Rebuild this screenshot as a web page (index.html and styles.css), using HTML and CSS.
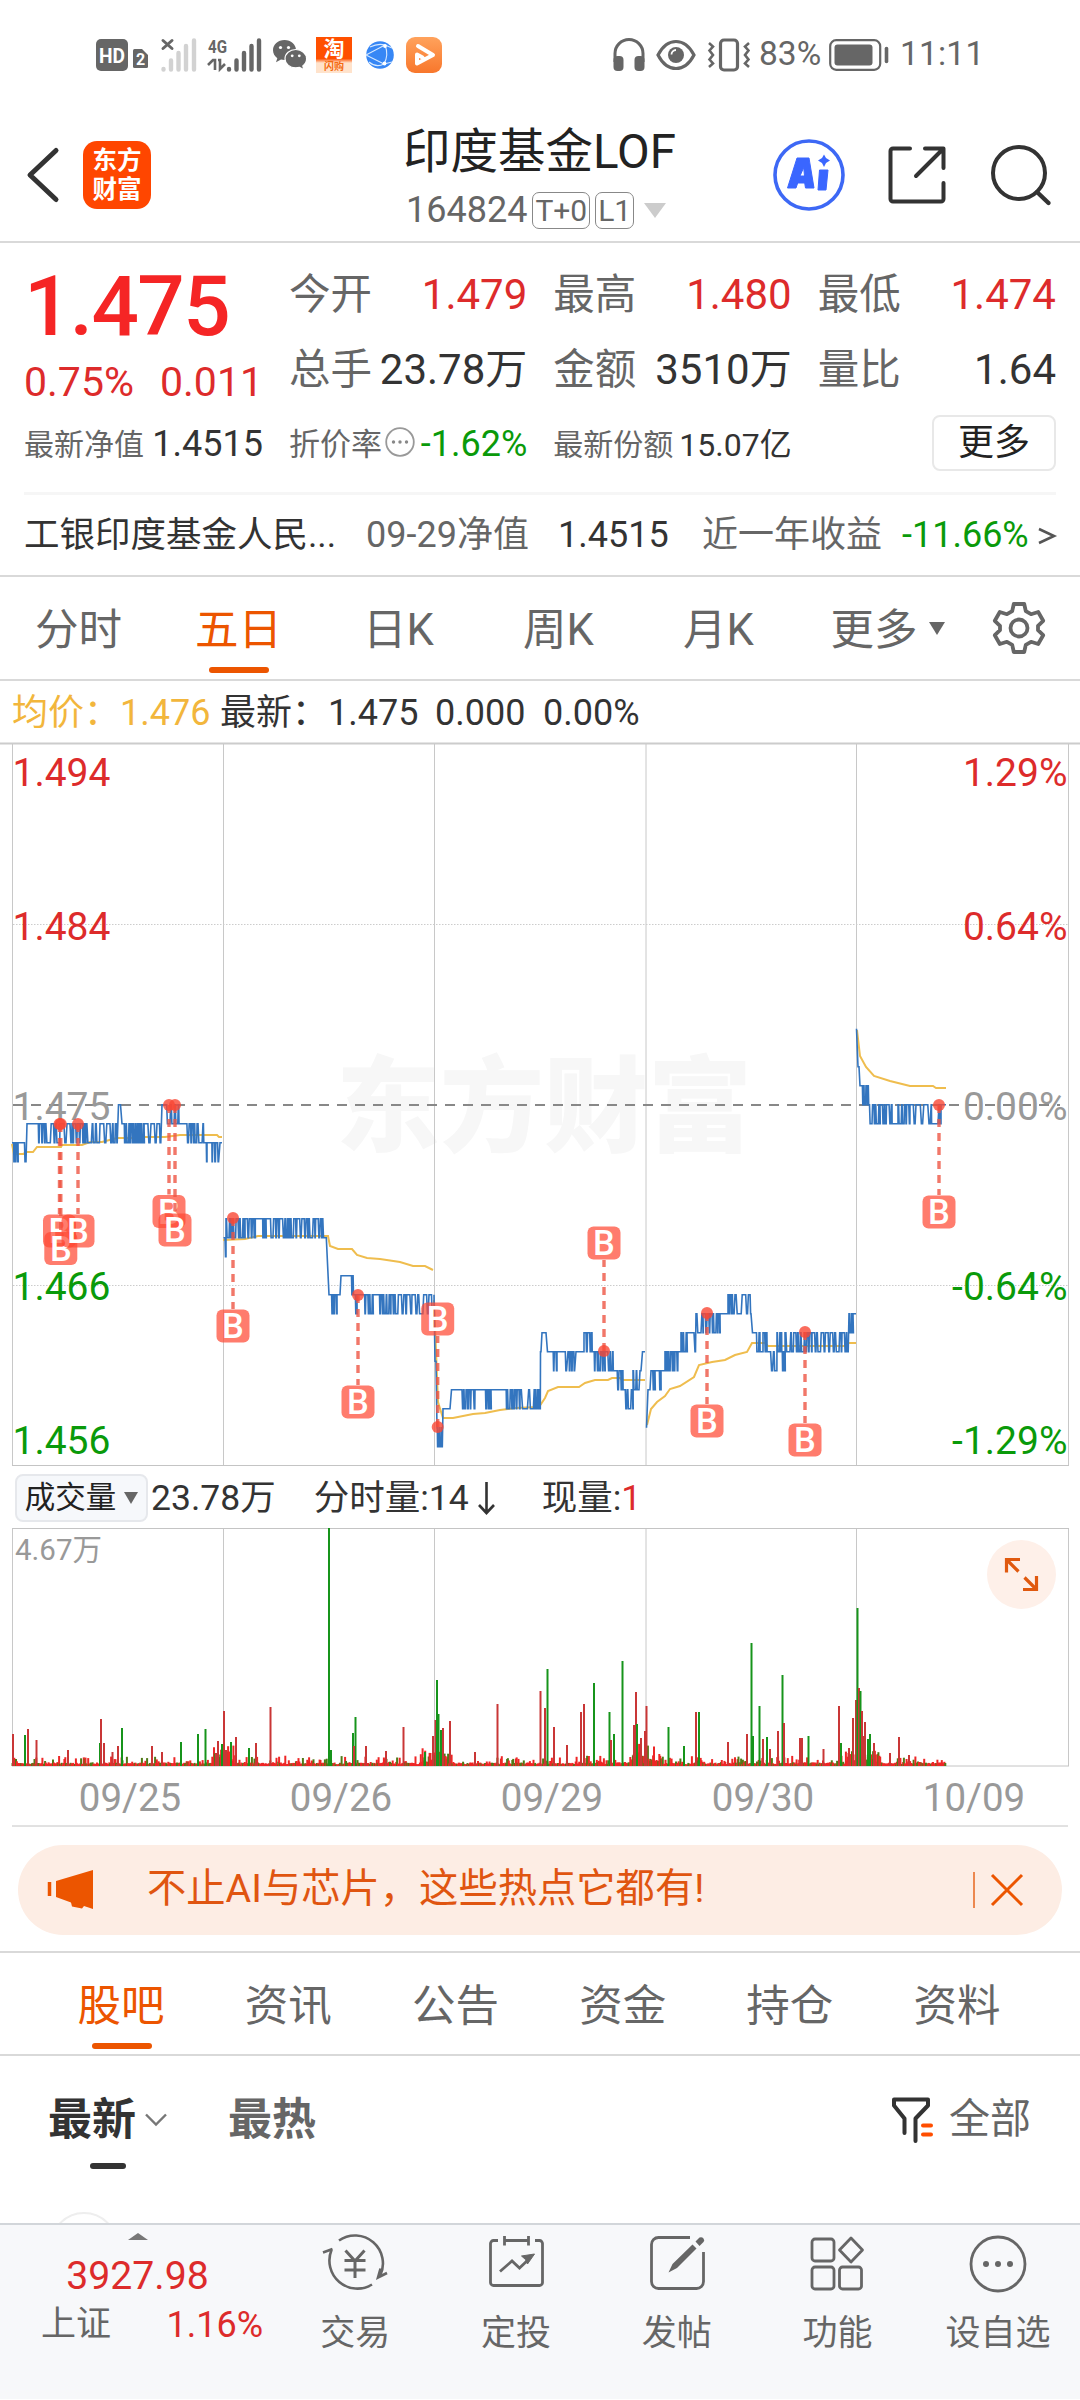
FILE: index.html
```html
<!DOCTYPE html>
<html lang="zh-CN">

<head>
    <meta charset="utf-8">
    <title>印度基金LOF</title>
    <meta name="viewport" content="width=device-width, initial-scale=1" />
    <link rel="stylesheet" href="styles.css">
</head>

<body>
    <div class="status">
        <svg class="hd" width="52" height="32" viewBox="0 0 52 32">
            <rect x="0" y="0" width="32" height="32" rx="5" fill="#666" />
            <text x="16" y="23.5" font-size="20" font-weight="700" fill="#fff" text-anchor="middle" textLength="26" lengthAdjust="spacingAndGlyphs">HD</text>
            <path d="M37 11.500a1.500 1.500 0 0 1 1.500-1.500H46l6 6v11.500a1.500 1.500 0 0 1-1.500 1.500h-12a1.500 1.500 0 0 1-1.500-1.500z" fill="#666" />
            <text x="44.500" y="26" font-size="16" font-weight="700" fill="#fff" text-anchor="middle">2</text>
        </svg>
        <svg class="sim1" width="36" height="34" viewBox="0 0 36 34">
            <path d="M2 2.500l9 8M11 2.500l-9 8" stroke="#666" stroke-width="3" stroke-linecap="round" />
            <path d="M2.500 31v.5M10 22.500v9M17.500 15v16.500M25 8v23.500M33 2.500v29" stroke="#d2d2d2" stroke-width="4.400" stroke-linecap="round" />
        </svg>
        <svg class="sim2" width="54" height="34" viewBox="0 0 54 34">
            <text x="0" y="14.500" font-size="19" font-weight="700" fill="#666" textLength="19" lengthAdjust="spacingAndGlyphs">4G</text>
            <path d="M0 27l5-5h2v10M10 22h2v9l5-5" fill="none" stroke="#666" stroke-width="2.600" />
            <path d="M21 31v.5M28.500 22.500v9M36 15v16.500M43.500 8v23.500M51 2.500v29" stroke="#666" stroke-width="4.400" stroke-linecap="round" />
        </svg>
        <svg class="wechat" width="34" height="30" viewBox="0 0 34 30">
            <path d="M11.500 0C5 0 0 4.500 0 10.200c0 3.200 1.700 6 4.300 8L3 22.300l5-2.700c1 .3 2.200.5 3.500.5 6.300 0 11.500-4.400 11.500-10S18 0 11.500 0z" fill="#666" />
            <path d="M22.800 9.500c-6.200 0-10.800 4.200-10.800 9.200s4.600 9.100 10.800 9.100c1.300 0 2.600-.2 3.700-.5l4.500 2.500-1.200-3.900c2.300-1.700 3.800-4.300 3.800-7.200 0-5-4.800-9.200-10.800-9.200z" fill="#666" stroke="#fff" stroke-width="1.200" />
            <g fill="#fff">
                <circle cx="7.500" cy="7.500" r="1.600" /><circle cx="15.500" cy="7.500" r="1.600" />
                <circle cx="19.200" cy="15.800" r="1.400" /><circle cx="26.300" cy="15.800" r="1.400" />
            </g>
        </svg>
        <div class="taobao"><b>淘</b><i>闪购</i></div>
        <svg class="globe" width="28" height="28" viewBox="0 0 28 28">
            <circle cx="14" cy="14" r="13.800" fill="#3787f5" />
            <path d="M0 14L19 4M0 14l18 9M19 4q4 10-1 19M4 6q8-4 15-2l7 3M18 23l8-2M3 21q7 6 15 2" fill="none" stroke="#d7e9ff" stroke-width="1.100" />
            <circle cx="19" cy="5" r="1.900" fill="#fff" /><circle cx="18.500" cy="22.500" r="1.900" fill="#fff" />
        </svg>
        <svg class="player" width="36" height="36" viewBox="0 0 36 36">
            <defs>
                <linearGradient id="og" x2="0" y2="1"><stop offset="0" stop-color="#ffa25c" /><stop offset="1" stop-color="#f8772c" /></linearGradient>
            </defs>
            <rect width="36" height="36" rx="9" fill="url(#og)" />
            <path d="M12 9l15 9-16 8.500v-9l5.500 3" fill="none" stroke="#fff" stroke-width="4" stroke-linejoin="round" stroke-linecap="round" />
        </svg>
        <div class="status-right">
            <svg width="32" height="34" viewBox="0 0 32 34">
                <path d="M2 24V15.500a14 14 0 0 1 28 0V24" fill="none" stroke="#666" stroke-width="3" />
                <rect x="0.500" y="18" width="10" height="15" rx="4" fill="#666" /><rect x="21.500" y="18" width="10" height="15" rx="4" fill="#666" />
            </svg>
            <svg class="eye" width="40" height="32" viewBox="0 0 40 32">
                <path d="M2 16Q9 2.500 20 2.500T38 16Q31 29.500 20 29.500T2 16z" fill="none" stroke="#666" stroke-width="3.200" />
                <circle cx="20" cy="16" r="8" fill="#666" />
                <path d="M15.500 15.500a4.500 4.500 0 0 1 4.500-4.500" fill="none" stroke="#fff" stroke-width="1.800" />
            </svg>
            <svg class="vibrate" width="42" height="34" viewBox="0 0 42 34">
                <rect x="12.500" y="2" width="17" height="30" rx="3.500" fill="none" stroke="#666" stroke-width="3.200" />
                <path d="M1 5l4 3.500-3.500 4L5 17l-3.500 4.500L5 25.500 1 29M41 5l-4 3.500 3.500 4L37 17l3.500 4.500-3.500 4 4 3.500" fill="none" stroke="#666" stroke-width="2.600" />
            </svg>
            <span class="battery-text">83%</span>
            <svg class="battery" width="60" height="32" viewBox="0 0 60 32">
                <rect x="1.200" y="1.200" width="50" height="29.600" rx="6" fill="none" stroke="#666" stroke-width="2.200" />
                <rect x="5.500" y="5.500" width="38" height="21" rx="3" fill="#666" />
                <path d="M57.500 9.500v13" stroke="#666" stroke-width="3.600" stroke-linecap="round" />
            </svg>
            <span class="clock">11:11</span>
        </div>
    </div>

    <header class="header">
        <svg class="back" width="32" height="54" viewBox="0 0 32 54">
            <path d="M29 2.500L3 27l26 24.500" fill="none" stroke="#333" stroke-width="5" stroke-linecap="round" stroke-linejoin="round" />
        </svg>
        <div class="app-logo">东方<br>财富</div>
        <div class="title">
            <h1>印度基金LOF</h1>
            <div class="code">164824<span class="tag">T+0</span><span class="tag">L1</span><i class="down"></i></div>
        </div>
        <svg class="ai" width="72" height="72" viewBox="0 0 72 72">
            <circle cx="36" cy="36" r="34" fill="none" stroke="#3d68f5" stroke-width="3.600" />
            <path d="M14.500 49L24 19h12l5 30h-8.500l-.8-5h-7l-1.700 5zM27 37h4.500l-.8-8.500zM46.500 31h8.500l-2 20h-8z" fill="#3a66ff" stroke="#3a66ff" stroke-linejoin="round" />
            <path d="M51 15.500l2 3.500 4 2.500-4 2.500-2 4-2-4-4-2.500 4-2.500z" fill="#3a66ff" />
        </svg>
        <svg class="share" width="58" height="58" viewBox="0 0 58 58">
            <path d="M22 2.500H5A2.500 2.500 0 0 0 2.500 5v48A2.500 2.500 0 0 0 5 55.500h48a2.500 2.500 0 0 0 2.500-2.500V37M37 2.500h18.500V22M54.500 3.500L28 30" fill="none" stroke="#333" stroke-width="4" stroke-linecap="round" stroke-linejoin="round" />
        </svg>
        <svg class="search" width="60" height="60" viewBox="0 0 60 60">
            <circle cx="28" cy="28" r="26" fill="none" stroke="#333" stroke-width="4" />
            <path d="M46 47l11.500 11" stroke="#333" stroke-width="4.400" stroke-linecap="round" />
        </svg>
    </header>

    <section class="quote">
        <div class="last">
            <strong>1.475</strong>
            <p><span>0.75%</span><span>0.011</span></p>
        </div>
        <div class="cell"><label>今开</label><span class="up">1.479</span></div>
        <div class="cell"><label>最高</label><span class="up">1.480</span></div>
        <div class="cell"><label>最低</label><span class="up">1.474</span></div>
        <div class="cell"><label>总手</label><span>23.78万</span></div>
        <div class="cell"><label>金额</label><span>3510万</span></div>
        <div class="cell"><label>量比</label><span>1.64</span></div>
        <div class="cell small"><label>最新净值</label><span>1.4515</span></div>
        <div class="cell small rate"><label>折价率</label>
            <svg width="30" height="30" viewBox="0 0 30 30"><circle cx="15" cy="15" r="13.800" fill="none" stroke="#999" stroke-width="1.800" /><g fill="#888"><circle cx="8.500" cy="15" r="1.700" /><circle cx="15" cy="15" r="1.700" /><circle cx="21.500" cy="15" r="1.700" /></g></svg>
            <span class="fall">-1.62%</span></div>
        <div class="cell small shares"><label>最新份额</label><span>15.07亿</span></div>
        <div class="cell small"><button class="more">更多</button></div>
    </section>

    <section class="fund">
        <span class="fund-name">工银印度基金人民...</span>
        <label class="nav-date">09-29净值</label>
        <span class="nav-value">1.4515</span>
        <label class="year">近一年收益</label>
        <span class="fall">-11.66%</span>
        <svg width="18" height="24" viewBox="0 0 18 24"><path d="M1 5l15 7-15 7" fill="none" stroke="#555" stroke-width="2.600" /></svg>
    </section>

    <nav class="periods">
        <a>分时</a>
        <a class="active">五日</a>
        <a>日K</a>
        <a>周K</a>
        <a>月K</a>
        <a class="wide">更多<i class="caret"></i></a>
        <svg class="gear" width="52" height="52" viewBox="0 0 52 52">
            <path d="M20.800 2h10.400l1.600 7.200 5.200 3 7.200-2.200 5 8.800-5.200 5v4.400l5.200 5-5 8.800-7.200-2.200-5.200 3L31.200 50H20.800l-1.600-7.200-5.200-3L6.800 42l-5-8.800 5.200-5v-4.400l-5.200-5 5-8.800 7.200 2.200 5.200-3z" fill="none" stroke="#666" stroke-width="3.800" stroke-linejoin="round" />
            <circle cx="26" cy="26" r="8.500" fill="none" stroke="#666" stroke-width="3.800" />
        </svg>
    </nav>

    <div class="legend"><span class="avg">均价：1.476</span><span class="latest">最新：1.475</span><span>0.000</span><span>0.00%</span></div>

    <svg id="price" class="chart" width="1080" height="724" viewBox="0 743 1080 724"></svg>

    <div class="volume-bar">
        <button class="indicator">成交量<i class="caret"></i></button>
        <span>23.78万</span>
        <span class="minute">分时量:14<svg width="20" height="36" viewBox="0 0 20 36"><path d="M9.500 2v31M2 25l7.500 8 7.500-8" fill="none" stroke="#333" stroke-width="2.600" /></svg></span>
        <span>现量:<em>1</em></span>
    </div>

    <svg id="volume" class="chart" width="1080" height="300" viewBox="0 1527 1080 300"></svg>

    <div class="banner">
        <svg width="46" height="40" viewBox="0 0 46 40">
            <path d="M1.500 12v14" stroke="#ec5500" stroke-width="3.500" />
            <path d="M8 11L45 0v39l-9-3-2 2.500-10-2-1-4L8 27z" fill="#ec5500" />
        </svg>
        <span>不止AI与芯片，这些热点它都有!</span>
        <svg class="close" width="32" height="32" viewBox="0 0 32 32"><path d="M1 1l30 30M31 1L1 31" stroke="#ec5500" stroke-width="3" /></svg>
    </div>

    <nav class="sections">
        <a class="active">股吧</a>
        <a>资讯</a>
        <a>公告</a>
        <a>资金</a>
        <a>持仓</a>
        <a>资料</a>
    </nav>

    <div class="posts">
        <div class="sort">
            <b>最新</b>
            <svg width="22" height="14" viewBox="0 0 22 14"><path d="M1 1.500l10 10 10-10" fill="none" stroke="#777" stroke-width="2.400" /></svg>
            <span>最热</span>
            <svg class="filter" width="44" height="46" viewBox="0 0 44 46">
                <path d="M13.500 36V21.500L3 8.500V2.500h34v6L24.500 21.500V44" fill="none" stroke="#333" stroke-width="4" stroke-linejoin="round" stroke-linecap="round" />
                <path d="M32 28.500h8M32 37.500h8" stroke="#ff4e00" stroke-width="4" stroke-linecap="round" />
            </svg>
            <label>全部</label>
        </div>
        <div class="avatar"></div>
    </div>

    <footer class="toolbar">
        <div class="index">
            <i class="up-caret"></i>
            <strong>3927.98</strong>
            <p><label>上证</label><span>1.16%</span></p>
        </div>
        <div class="tool">
            <svg width="66" height="60" viewBox="0 0 66 60">
                <g fill="none" stroke="#666" stroke-width="2.600">
                    <path d="M17 7.500A28 28 0 0 1 58 43M50 51.500A28 28 0 0 1 9.500 17M1 19.500l9.500-3.500M65 40l-9 4.500 2.500-9" />
                    <path d="M23.500 17.500L33 28l9.500-10.500M22.500 27.500h21M22.500 37h21M33 27v18" stroke-width="3" />
                </g>
            </svg>交易
        </div>
        <div class="tool">
            <svg width="66" height="60" viewBox="0 0 66 60">
                <g fill="none" stroke="#666" stroke-width="2.800">
                    <path d="M15 7.500h-4.500a3 3 0 0 0-3 3v39a3 3 0 0 0 3 3h46a3 3 0 0 0 3-3v-39a3 3 0 0 0-3-3H52M21.500 3v9.500M45.500 3v9.500M21.500 7.500h24M17 38.500l12-10.500 7.500 7L46 26" />
                </g>
                <path d="M38.500 23l13-2-7 10-2-4.500z" fill="#666" stroke="#666" />
            </svg>定投
        </div>
        <div class="tool">
            <svg width="66" height="60" viewBox="0 0 66 60">
                <path d="M46 4.500H14.500a7 7 0 0 0-7 7v37a7 7 0 0 0 7 7h38a7 7 0 0 0 7-7V19" fill="none" stroke="#666" stroke-width="2.800" />
                <path d="M48.500 11.500l4 4L33 35l-8.500 4.500L28.500 31zM51.500 8.500l4-4q2.500-1 4 1t0 3.500l-4 4z" fill="#666" />
            </svg>发帖
        </div>
        <div class="tool">
            <svg width="66" height="60" viewBox="0 0 66 60">
                <g fill="none" stroke="#666" stroke-width="2.800">
                    <rect x="8" y="6" width="22" height="22" rx="3" /><rect x="8" y="34" width="22" height="22" rx="3" />
                    <rect x="35.500" y="34" width="22" height="22" rx="3" /><path d="M47 5l11.500 12L47 29 35.500 17z" stroke-linejoin="round" />
                </g>
            </svg>功能
        </div>
        <div class="tool">
            <svg width="66" height="60" viewBox="0 0 66 60">
                <circle cx="33" cy="31" r="27" fill="none" stroke="#666" stroke-width="2.800" />
                <g fill="#666"><circle cx="21" cy="31" r="3" /><circle cx="33" cy="31" r="3" /><circle cx="45" cy="31" r="3" /></g>
            </svg>设自选
        </div>
    </footer>

    <script src="chart.js"></script>
</body>

</html>
```
FILE: styles.css
```css
* {
    box-sizing: border-box;
}

body {
    margin: 0;
    width: 1080px;
    height: 2400px;
    overflow: hidden;
    background: #fff;
    color: #333;
    font-family: Roboto, "Noto Sans CJK SC", sans-serif;
    font-size: 36px;
    line-height: 1.2;
}

svg {
    display: block;
    flex: none;
    overflow: visible;
}

svg text {
    font-family: Roboto, "Noto Sans CJK SC", sans-serif;
}

h1,
p {
    margin: 0;
}

i,
em {
    font-style: normal;
}

button {
    padding: 0;
    color: #222;
    font-family: inherit;
}

.up {
    color: #dd2b2b;
}

.fall {
    color: #0a9a0a;
}

/* phone status bar */
.status {
    display: flex;
    align-items: center;
    height: 109px;
    padding: 0 102px 0 96px;
    color: #666;
    font-size: 33.5px;
}

.sim1 {
    margin-left: 13px;
}

.sim2 {
    margin-left: 11px;
}

.wechat {
    margin-left: 11px;
}

.taobao {
    width: 36px;
    height: 36px;
    margin-left: 9px;
    background: linear-gradient(#ff5000 60%, #ffe3cc 72%);
    text-align: center;
}

.taobao b,
.taobao i {
    display: block;
    color: #fff;
    font-size: 21px;
    line-height: 24px;
}

.taobao i {
    color: #f56a10;
    font-size: 10px;
    font-weight: 700;
    line-height: 12px;
}

.globe {
    margin-left: 14px;
}

.player {
    margin-left: 12px;
}

.status-right {
    display: flex;
    align-items: center;
    margin-left: auto;
}

.eye {
    margin-left: 11px;
}

.vibrate {
    margin-left: 12px;
}

.battery-text {
    width: 63px;
    margin-left: 9px;
}

.battery {
    margin-left: 7px;
}

.clock {
    width: 78px;
    margin-left: 11px;
    letter-spacing: .2px;
}

/* title bar */
.header {
    display: flex;
    align-items: center;
    height: 134px;
    padding: 0 29px 0 27px;
    border-bottom: 2px solid #d9d9d9;
}

.app-logo {
    width: 68px;
    height: 68px;
    margin-left: 24px;
    padding-top: 5px;
    border-radius: 14px;
    background: #ff4600;
    color: #fff;
    font-size: 24.500px;
    font-weight: 700;
    line-height: 29px;
    text-align: center;
}

.title {
    flex: 1;
    padding: 10px 0 0 252px;
    white-space: nowrap;
}

.title h1 {
    color: #222;
    font-size: 47.5px;
    font-weight: 400;
    line-height: 60px;
}

.code {
    display: flex;
    align-items: center;
    padding-left: 3px;
    color: #666;
    line-height: 56px;
}

.tag {
    height: 37px;
    margin-left: 5px;
    padding: 0 2px;
    border: 1.500px solid #888;
    border-radius: 7px;
    font-size: 30px;
    line-height: 35px;
}

.down {
    margin-left: 10px;
    border: 11px solid transparent;
    border-top: 15px solid #ccc;
    border-bottom: 0;
}

.share {
    margin-left: 43px;
}

.search {
    margin-left: 45px;
}

/* quote figures */
.quote {
    display: grid;
    grid-template-columns: repeat(4, 1fr);
    grid-template-rows: repeat(3, 75px);
    column-gap: 26px;
    height: 252px;
    margin: 0 24px;
    padding-top: 14px;
    border-bottom: 3px solid #f6f6f6;
}

.last {
    grid-row: span 2;
    color: #dd2b2b;
}

.last strong {
    display: block;
    padding-top: 1px;
    color: #f52525;
    font-size: 83.500px;
    font-weight: 500;
    letter-spacing: -1.600px;
    line-height: 98px;
}

.last p {
    display: flex;
    justify-content: space-between;
    width: 239px;
    font-size: 41px;
    line-height: 52px;
}

.cell {
    display: flex;
    align-items: center;
    justify-content: space-between;
    padding-top: 1px;
    font-size: 42px;
    white-space: nowrap;
}

.cell label,
.fund label {
    color: #666;
}

.cell label {
    font-size: 41.500px;
}

.cell.small {
    font-size: 36px;
}

.small label {
    font-size: 30px;
}

.rate label {
    font-size: 31px;
}

.rate svg {
    margin: -6px 0 0 -1px;
}

.rate span {
    margin-left: 2px;
}

.shares span {
    font-size: 32px;
}

.more {
    width: 124px;
    height: 56px;
    margin: -4px 0 0 auto;
    border: 2px solid #e8e8e8;
    border-radius: 8px;
    background: #fff;
    font-size: 36px;
    line-height: 50px;
}

.fund {
    display: flex;
    align-items: center;
    height: 82px;
    padding: 1px 24px 0;
    border-bottom: 2px solid #d9d9d9;
    font-size: 36px;
    white-space: nowrap;
}

.fund-name {
    width: 342px;
    font-size: 35.500px;
}

.nav-date {
    width: 192px;
}

.nav-value {
    width: 144px;
}

.year {
    width: 200px;
}

.fund svg {
    margin-left: auto;
}

/* chart period tabs */
.periods {
    display: flex;
    align-items: center;
    height: 104px;
    border-bottom: 2px solid #d9d9d9;
}

.periods a,
.sections a {
    position: relative;
    width: 160px;
    height: 102px;
    padding-right: 3px;
    color: #666;
    font-size: 43.500px;
    line-height: 108px;
    text-align: center;
}

.periods .wide {
    width: 178px;
    white-space: nowrap;
}

.periods .active,
.sections .active {
    color: #ec5500;
}

.periods .active::after,
.sections .active::after {
    content: "";
    position: absolute;
    bottom: 6px;
    left: 49px;
    width: 60px;
    height: 6px;
    border-radius: 3px;
    background: #ec5500;
}

.caret {
    display: inline-block;
    margin: 0 0 10px 11px;
    border: 8px solid transparent;
    border-top: 13px solid #666;
    border-bottom: 0;
}

.gear {
    margin-left: 15px;
}

.legend {
    display: flex;
    align-items: center;
    height: 62px;
    padding: 4px 0 0 12px;
    font-size: 36px;
    white-space: nowrap;
}

.legend span {
    width: 108px;
}

.legend .avg {
    width: 208px;
    color: #f2b63c;
}

.legend .latest {
    width: 215px;
}

/* volume panel */
.volume-bar {
    display: flex;
    align-items: center;
    height: 60px;
    padding: 2px 0 0 15px;
    font-size: 35.500px;
    white-space: nowrap;
}

.indicator {
    width: 133px;
    height: 48px;
    margin: -1px 3px 0 0;
    border: 2px solid #e6e8ec;
    border-radius: 8px;
    background: #f6f8fb;
    font-size: 30.500px;
    line-height: 43px;
}

.indicator .caret {
    margin: 0 0 4px 8px;
    border-width: 7px;
    border-top-width: 12px;
    border-bottom: 0;
}

.minute {
    display: flex;
    align-items: center;
    margin: 0 45px 0 38px;
}

.minute svg {
    margin-left: 8px;
}

.volume-bar em {
    color: #dd2b2b;
}

/* promo banner */
.banner {
    display: flex;
    align-items: center;
    height: 90px;
    margin: 18px 18px 16px;
    padding: 0 39px 0 30px;
    border-radius: 45px;
    background: #fdede4;
    color: #e05510;
    font-size: 39.300px;
}

.banner span {
    flex: 1;
    margin-left: 53px;
    white-space: nowrap;
}

.close {
    width: 50px;
    height: 36px;
    padding: 2px 0 2px 16px;
    border-left: 2px solid #ec8850;
}

.sections {
    display: flex;
    height: 105px;
    padding-left: 42px;
    border-top: 2px solid #d9d9d9;
    border-bottom: 2px solid #d9d9d9;
}

.sections a {
    width: 167.200px;
    padding-right: 9px;
}

.sections .active::after {
    left: 50px;
}

/* post list */
.posts {
    height: 167px;
    overflow: hidden;
}

.sort {
    position: relative;
    display: flex;
    align-items: center;
    height: 127px;
    padding: 1px 49px 0 48px;
    color: #666;
    font-size: 44px;
}

.sort b {
    margin-right: 9px;
    color: #333;
}

.sort b::after {
    content: "";
    position: absolute;
    bottom: 14px;
    left: 90px;
    width: 36px;
    height: 6px;
    border-radius: 3px;
    background: #333;
}

.sort span {
    margin-left: 61px;
    font-weight: 700;
}

.filter {
    margin-left: auto;
}

.sort label {
    margin-left: 14px;
    font-size: 41px;
}

.avatar {
    width: 68px;
    height: 68px;
    margin: 29px 0 0 50px;
    border: 2px solid #eee;
    border-radius: 50%;
}

/* bottom toolbar */
.toolbar {
    display: flex;
    height: 176px;
    border-top: 2px solid #d2d6da;
    background: #f7f8fa;
    color: #666;
}

.index {
    display: flex;
    flex-direction: column;
    align-items: center;
    width: 275px;
    color: #dd2b2b;
}

.up-caret {
    margin-top: 8px;
    border: 10px solid transparent;
    border-top: 0;
    border-bottom: 7px solid #777;
}

.index strong {
    margin-top: 12px;
    font-size: 39.200px;
    font-weight: 400;
    line-height: 48px;
}

.index p {
    display: flex;
    justify-content: space-between;
    width: 222px;
    margin-left: 29px;
    line-height: 50px;
}

.index label {
    color: #666;
    font-size: 35px;
}

.tool {
    display: flex;
    flex-direction: column;
    align-items: center;
    width: 160.700px;
    padding-top: 8px;
    font-size: 35px;
    line-height: 82px;
    white-space: nowrap;
}
```
FILE: chart.js
```js
const PRICE = document.getElementById('price');
const VOLUME = document.getElementById('volume');
const GRID = [12.5, 223.5, 434.5, 646, 856.5, 1068.5];

let seed = 7;
const random = () => (seed = (seed * 16807) % 2147483647) / 2147483647;

// one price tick (0.001) is 19px, level 0 is the previous close
const y = level => 1104.8 + level * 19;

// [from, to, level] is flat, [from, to, high, low, period] swings between two ticks
const days = [
    [[12, 13, 2], [13, 18, 2, 3, 2], [18, 24.5, 2], [25, 26, 3], [27, 37, 1], [37, 45, 1, 2, 2.4], [45, 60, 1, 2, 4], [60, 72, 1, 2, 5], [72, 86, 1, 2, 2.2], [86, 117, 1, 2, 4], [118.5, 120.5, 0], [122, 124, 1], [124, 144, 1, 2, 1.8], [144, 161, 1, 2, 4.4], [162, 166, 0], [166, 180, 0, 1, 2.8], [181.5, 184, 1], [184, 205, 1, 2, 3.4], [205, 207, 2, 3, 2], [207, 211, 2], [211, 219, 2, 3, 2], [220, 222, 2]],
    [[223.5, 225, 7], [225.5, 226, 8], [226, 245, 6, 7, 2.4], [245, 255, 6, 7, 4], [255, 262, 6], [262, 266, 6, 7, 2], [266, 270, 6], [270, 285, 6, 7, 3.8], [285, 297, 6, 7, 2], [297, 322, 6, 7, 2.8], [322, 327, 6, 7, 3.5], [329, 330, 10], [330, 337, 10, 11, 2], [337, 340, 10], [341, 349, 9], [350, 355, 9, 10, 2], [355, 357, 10, 11, 2], [357, 363, 10], [363, 373, 10, 11, 2.4], [373, 378, 10], [378, 391, 10, 11, 2], [391, 412, 10, 11, 4], [412, 433, 10, 11, 3.5]],
    [[434, 434, 10], [435, 436, 13.5], [437, 437, 17], [437, 442, 17, 18, 3], [443, 450, 16], [451.5, 460, 15], [460, 475, 15, 16, 2.8], [475, 484, 15], [484, 491, 15, 16, 2], [491, 505, 15], [505, 520, 15, 16, 2.6], [520, 535, 15, 16, 5], [535, 540, 15, 16, 2], [540.5, 541, 13], [542, 546, 12], [547.5, 552, 13], [552, 557, 13, 14, 2], [557, 563, 13], [563, 567, 13, 14, 3], [568, 575, 13, 14, 2], [576, 584, 13], [584, 592, 12, 13, 2.6], [593, 598, 13, 14, 2], [598, 605, 13, 14, 2.6], [605, 614, 13, 14, 3], [615, 623, 14, 15, 2.4], [623, 633, 15, 16, 2.6], [633, 639, 14, 15, 3], [640, 641, 14], [642.5, 645, 13]],
    [[646.5, 646.5, 17], [648, 650, 15], [651, 655, 14, 15, 2], [655, 659, 14], [659, 661, 14, 15, 2], [661, 665, 14], [665, 678, 13, 14, 2], [678, 681, 13], [681, 687, 12, 13, 2.4], [687, 694, 12], [695, 695.5, 13], [696, 703, 11, 12, 4], [703, 713, 11, 12, 2.4], [713, 720, 11, 12, 2.6], [720, 728, 11], [728, 734, 10, 11, 1.8], [735, 751, 10, 11, 4.4], [752.5, 755, 12], [756, 760, 12, 13, 2], [760, 763, 13], [763, 767, 12, 13, 2], [767, 777, 13, 14, 4.5], [777, 782, 12, 13, 2], [782, 785, 13, 14, 2.5], [785, 812, 12, 13, 3.4], [812, 848, 12, 13, 3.2], [849, 853, 11, 12, 2], [853, 856, 11]],
    [[856.5, 856.5, -4], [858, 859, -2], [860, 861, -1], [861, 870, -1, 0, 3], [869, 880, 0, 1, 2.4], [880, 892, 0, 1, 3.2], [892, 898, 1], [898, 910, 0, 1, 2.4], [910, 932, 0, 1, 5], [932, 938, 1], [939, 939.5, 0], [939.5, 941, 1], [941, 946, 0]]
];

const averages = [
    '12,1144 14,1154 24,1154 25,1152 33,1152 37,1147 61,1147 62,1145 82,1145 90,1142 102,1142 117,1138 142,1138 145,1137 165,1137 180,1135 217,1135 219,1137 222,1137',
    '223,1240 245,1239 258,1236 328,1236 330,1246 338,1249 352,1249 357,1255 367,1258 380,1259 400,1262 413,1266 425,1266 433,1270',
    '434,1300 438,1402 443,1418 453,1418 473,1414 485,1413 500,1410 515,1408 539,1407 545,1398 548,1391 558,1387 579,1387 585,1383 595,1380 608,1380 612,1378 620,1378 622,1380 645,1380',
    '647,1425 651,1409 657,1402 665,1396 670,1389 680,1386 694,1377 699,1365 712,1362 725,1360 735,1355 747,1352 752,1343 765,1343 768,1346 846,1346 848,1343 856,1343',
    '857,1030 860,1056 866,1067 874,1076 890,1081 910,1086 933,1086 936,1088 946,1088'
];

// x, trade y, badge y
const trades = [
    [59.5, 1124, 1231], [60.8, 1124, 1248.5], [78, 1124, 1231], [169, 1105, 1211.5], [175, 1105, 1230],
    [233, 1218, 1326], [358, 1295, 1402], [437.7, 1427, 1319], [604, 1351, 1243],
    [707, 1313, 1421], [805, 1332, 1440], [939, 1105, 1212]
];

const spikes = 'r13:32 g25:31 r28:37 r36.5:26 r68:16 g100:23 r101:47 r104:23 r112.5:14 r118:20 g122:38 r152:20 r162:14 g181:24 g198:32 g205.5:37 r216:13 r218:25 g222:22 r224:55 r226:16 g231:24 r236:29 g249:18 r256:23 r270.5:59 g329:238 g331:16 g353:33 g355.5:49 r354:20 r366:20 r386:15 r403.5:39 g425:14 r433:30 r435.5:46 g437:86 g438.5:52 g441:36 r443:38 r450:45 r475:14 r497.5:62 r540.5:75 r545:58 g547.5:97 r554:39 r567:21 r581:54 r584:62 g594:83 g609.5:54 r611:26 g614:32 g622.5:105 r634:41 r636:74 g637:42 r641:28 r645:35 r646.5:60 g668.5:39 g684:20 r696:54 g699:54 r728:24 r747:32 g751.5:123 g753:30 g759.5:60 r763:27 g767:29 r770:17 r778:35 g782.5:91 r784:43 r800:28 r802:28 g808.5:30 r823.5:17 r839:60 g841:23 r849:18 r853:48 r856:66 g857.5:158 r859:78 g860.5:75 r862:55 r864:30 r865:44 g868:27 g870:32 r874:23 r890:13 r899:29 r909:11'.split(' ');

function frame(top, bottom) {
    let out = GRID.map(x => `<path d="M${x} ${top}V${bottom}" stroke="#c8c8c8"/>`).join('');
    return out + `<path d="M12 ${bottom}H1069" stroke="#c4c4c4"/>`;
}

function line(segments) {
    const points = [];
    for (const [from, to, high, low, period] of segments) {
        if (low === undefined) {
            points.push([from, y(high)], [to, y(high)]);
            continue;
        }
        let x = from;
        while (x < to) {
            const step = Math.min(period * (0.65 + random() * 1.1), to - x + 0.5);
            // some swings rest longer on the first tick, some on the second
            const hold = random() > 0.4 ? 0.55 : 0.15;
            points.push([x, y(high)], [x + step * hold, y(high)], [x + step * (hold + 0.15), y(low)], [x + step * 0.85, y(low)]);
            x += step;
        }
    }
    return points.map(p => p[0].toFixed(1) + ',' + p[1].toFixed(1)).join(' ');
}

function drawPrice() {
    let out = `<text x="336" y="1144" font-size="104" font-weight="900" fill="#f7f7f7">东方财富</text>`;
    out += `<path d="M0 743.5H1080" stroke="#ccc" stroke-width="2"/>` + frame(744, 1465.5);
    out += `<path d="M13 924.5H1068M13 1285.5H1068" stroke="#ccc" stroke-dasharray="1.500 1.500"/>`;
    out += `<path d="M13 1105H1060" stroke="#888" stroke-width="2" stroke-dasharray="10 8"/>`;

    const labels = [['1.494', '1.29%', 786, '#dd2b2b'], ['1.484', '0.64%', 940, '#dd2b2b'], ['1.475', '0.00%', 1120, '#999'], ['1.466', '-0.64%', 1300, '#0a9a0a'], ['1.456', '-1.29%', 1454, '#0a9a0a']];
    for (const [price, rate, base, color] of labels) {
        out += `<text x="12.500" y="${base}" font-size="39" fill="${color}">${price}</text>`;
        out += `<text x="1067.500" y="${base}" font-size="39" fill="${color}" text-anchor="end">${rate}</text>`;
    }
    out += averages.map(p => `<polyline points="${p}" fill="none" stroke="#efbd4e" stroke-width="2"/>`).join('');
    out += days.map(d => `<polyline points="${line(d)}" fill="none" stroke="#3375bf" stroke-width="1.600"/>`).join('');

    for (const [x, from, to] of trades) {
        const end = to > from ? to - 17 : to + 17;
        out += `<path d="M${x} ${from}V${end}" stroke="#ee5544" stroke-opacity=".8" stroke-width="3.400" stroke-dasharray="8 6"/>`;
        out += `<circle cx="${x}" cy="${from}" r="6" fill="#f94735" fill-opacity=".8"/>`;
        out += `<rect x="${x - 16.5}" y="${to - 16.5}" width="33" height="33" rx="6" fill="#ff4a35" fill-opacity=".72"/>`;
        out += `<text x="${x}" y="${to + 12}" font-size="34.500" font-weight="500" fill="#fff" text-anchor="middle">B</text>`;
    }
    PRICE.innerHTML = out;
}

function drawVolume() {
    const bar = (x, h, color) => `<path d="M${x} 1766v${-h}" stroke="${color}" stroke-width="2"/>`;

    let out = frame(1528, 1766) + '<path d="M12 1528.500H1069M12 1826H1068" stroke="#c4c4c4"/>';
    for (let x = 12.5; x < 946; x += 0.88) {
        const busy = (x > 214 && x < 236) || (x > 420 && x < 452) || (x > 630 && x < 662) || (x > 845 && x < 880);
        let h = 1.5 + random() * 2;
        if (random() > 0.72) h += random() * 7;
        if (busy) h += random() * 13;
        out += bar(x.toFixed(1), h.toFixed(1), random() > 0.74 ? '#4f7a16' : '#ee2626');
    }
    for (const spike of spikes) {
        const [x, h] = spike.slice(1).split(':');
        out += bar(x, h, spike[0] === 'g' ? '#16941b' : '#c93636');
    }
    out += '<text x="15" y="1560" font-size="29.500" fill="#999">4.67万</text>';
    ['09/25', '09/26', '09/29', '09/30', '10/09'].forEach((date, i) => {
        out += `<text x="${130 + i * 211}" y="1811" font-size="38.500" fill="#999" text-anchor="middle">${date}</text>`;
    });
    out += '<circle cx="1021.500" cy="1574.500" r="34.500" fill="#fef0e9"/>';
    out += '<path d="M1006.500 1572.500V1559.500H1020M1007 1560l11.500 11.500M1023 1589.500h13.500V1576M1036 1589l-11.500-11.500" fill="none" stroke="#e0590f" stroke-width="3.200"/>';
    VOLUME.innerHTML = out;
}

drawPrice();
drawVolume();
```
